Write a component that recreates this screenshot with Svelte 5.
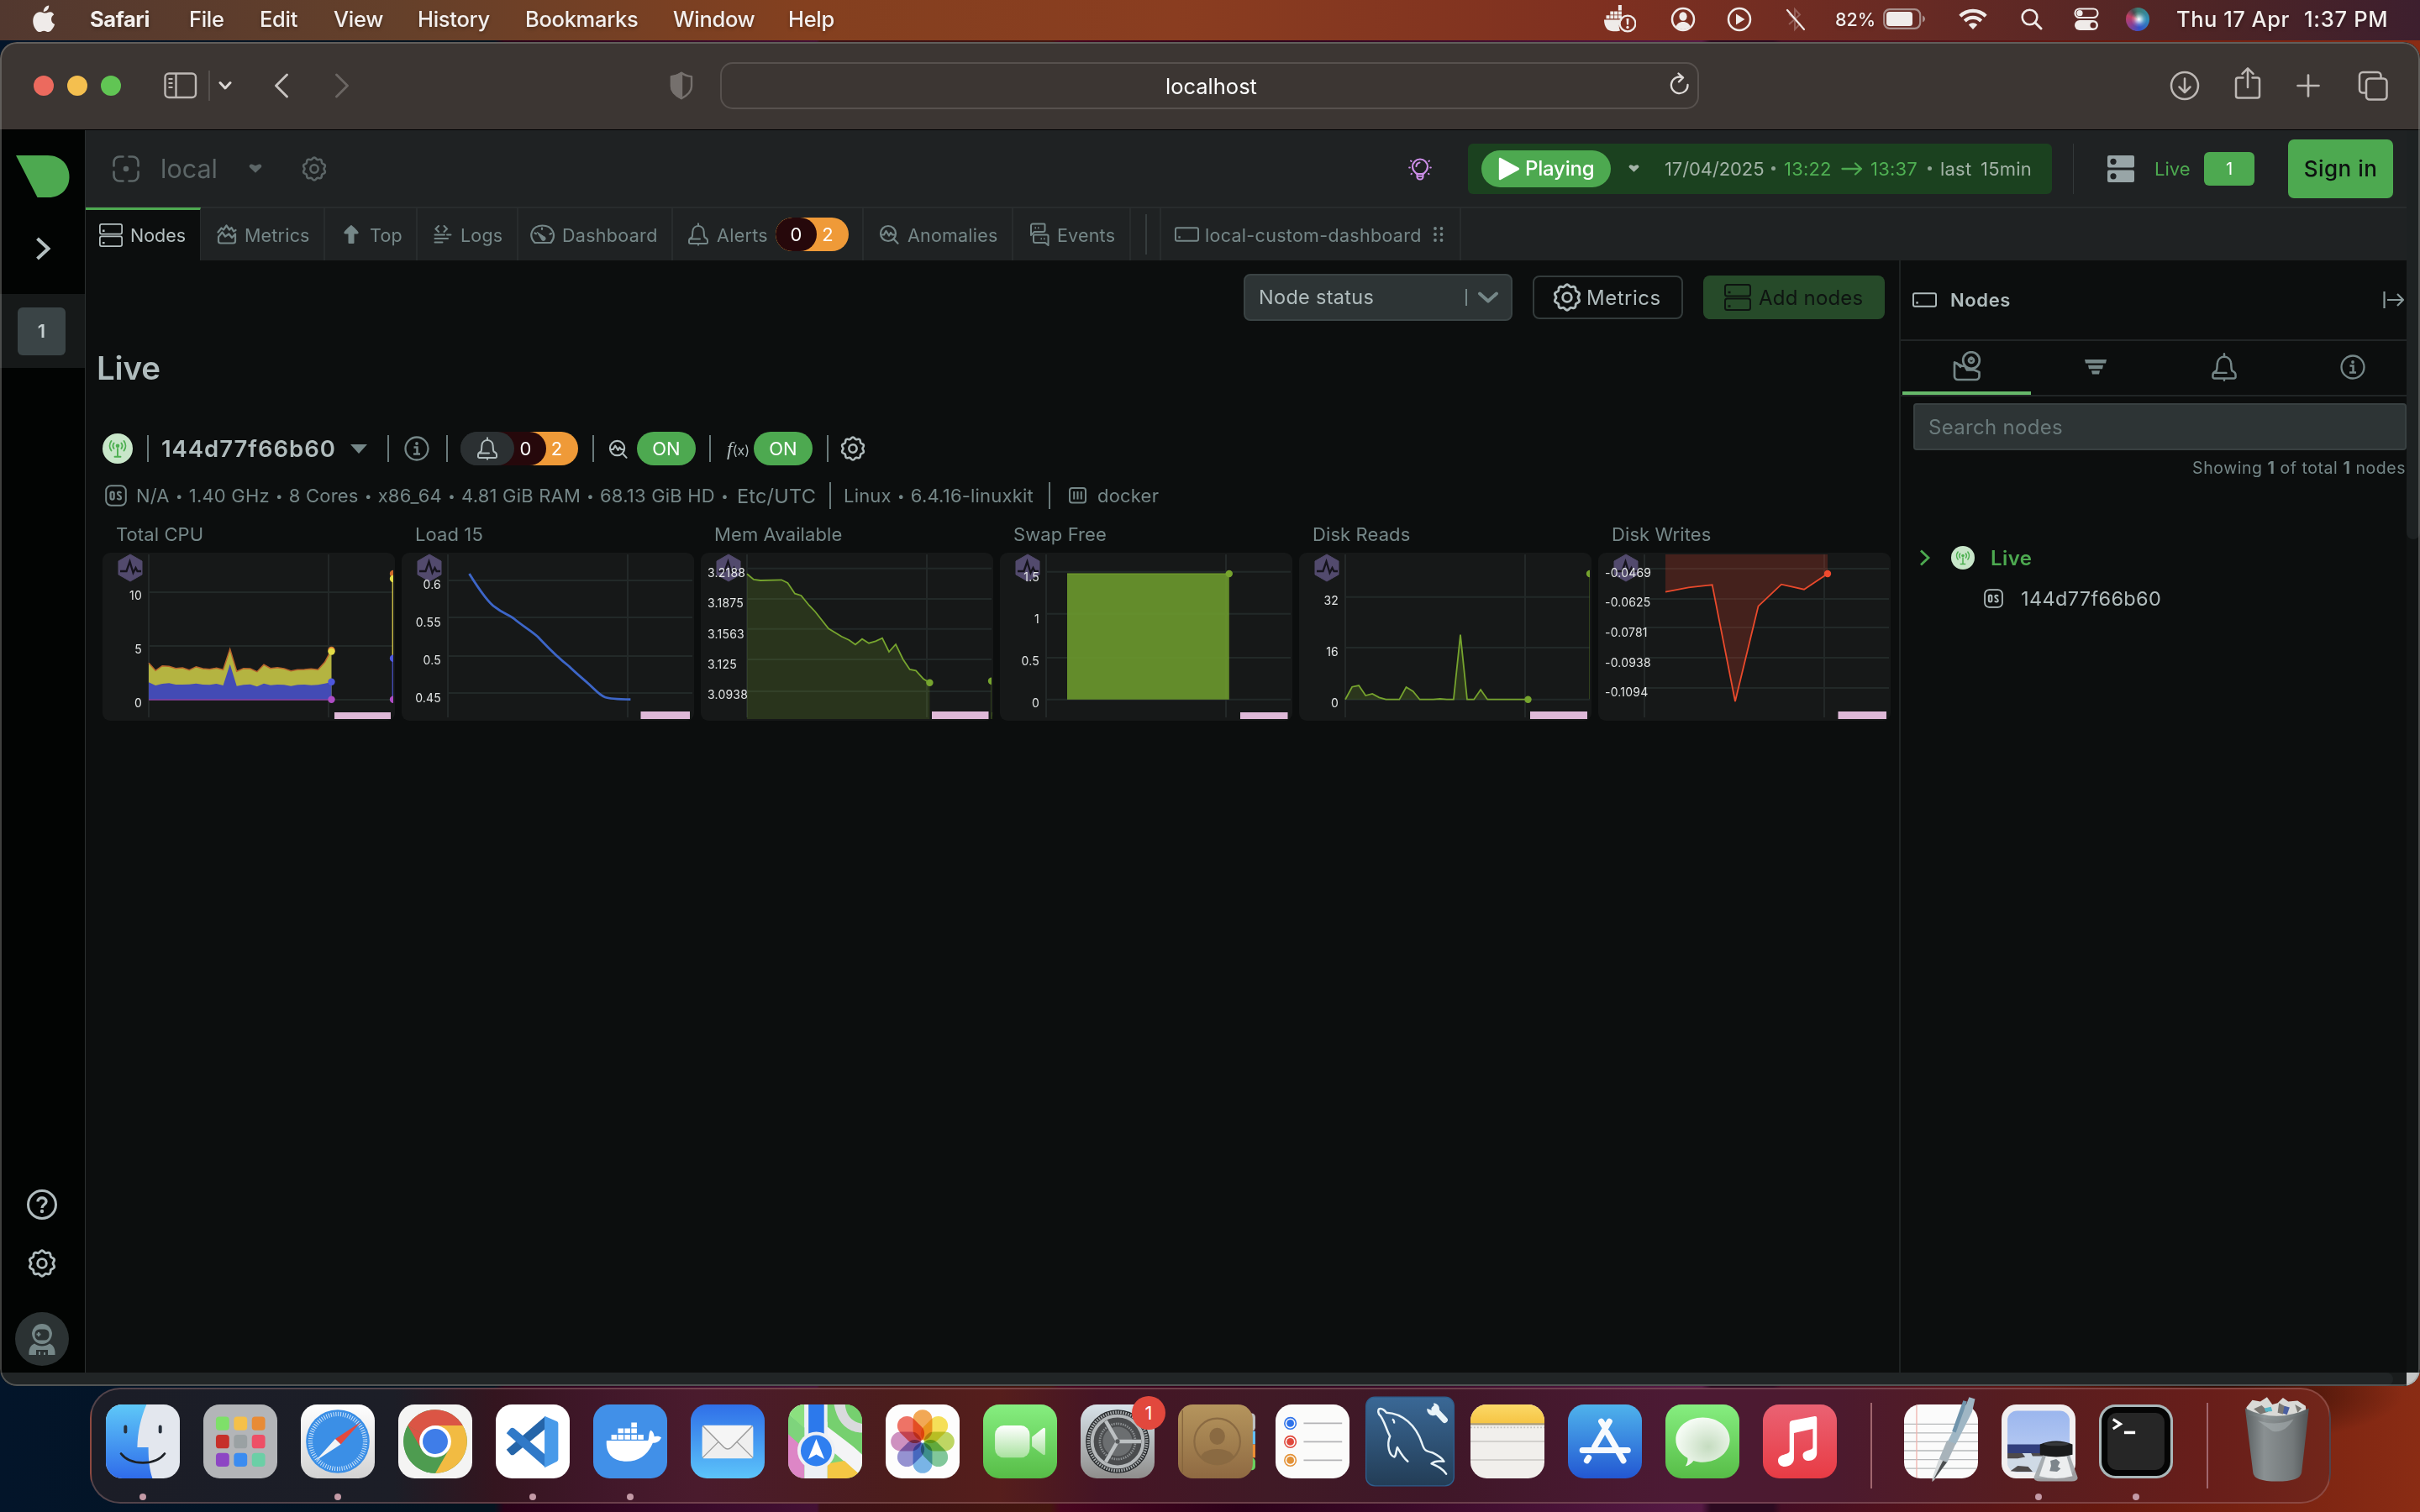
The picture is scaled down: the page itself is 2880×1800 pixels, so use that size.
<script>
  // Scalloped outline used by every settings glyph.
  const gearPath = (() => {
    const pts = [];
    for (let i = 0; i <= 160; i++) {
      const a = (i / 160) * Math.PI * 2 - Math.PI / 2;
      const r = 13.3 + 1.05 * Math.cos(10 * (a + Math.PI / 2));
      pts.push(`${(16 + r * Math.cos(a)).toFixed(2)} ${(16 + r * Math.sin(a)).toFixed(2)}`);
    }
    return 'M' + pts.join('L') + 'Z';
  })();

  const STEP = 8.056;
  const series = (ys) => ys.map((y, i) => [55 + i * STEP, y]);
  const line = (pts) => 'M' + pts.map((p) => p[0].toFixed(1) + ' ' + p[1]).join('L');
  const area = (pts, base) =>
    line(pts) + `L${pts[pts.length - 1][0].toFixed(1)} ${base}L${pts[0][0].toFixed(1)} ${base}Z`;

  const cpuTop = series([131.3, 140.3, 134.7, 135.3, 137.7, 137, 139.7, 135.7, 138, 138.7, 137.3, 139.3, 114.7, 141.3, 137.7, 138, 141.7, 133.3, 137.7, 136.7, 138, 140.7, 139.3, 139, 138.3, 139.3, 130.3, 115.3]);
  const cpuLow = series([154.3, 158, 156, 155.3, 157, 157, 156.7, 155.7, 157, 157.3, 156, 158, 132.7, 158.7, 157.3, 156.7, 159.3, 155.7, 157.7, 157, 157.3, 158.7, 157.3, 157, 157.7, 157.3, 155.7, 154]);
  const load = 'M80.5 25C88 37 101 58 111 64.7C120 72 126 73 133 78C145 88 153 92 162 100C176 115 186 125 199 135C208 144 216 150 223.5 157C232 165 236 170 242 172Q248 174.3 272.4 174.6';
  const mem = [[55, 25.3], [63, 32], [71, 33], [96, 32.3], [103.4, 36], [112, 48.7], [119.4, 51], [129, 62.7], [136, 70], [152, 90.3], [167.5, 99.7], [176.5, 104], [184, 109.3], [192, 102.7], [200, 107.7], [208, 105.3], [216, 101.7], [224, 118], [232, 109], [240.7, 127], [248.7, 139], [256, 140.3], [265, 150.3], [272.4, 154.7]];
  const swap = [[80, 25], [272.8, 25]];
  const z = 174.7;
  const reads = series([z, 159.7, 158, 170, 168, 172.3, z, z, z, 160, 165, z, z, z, 174, z, z, 97.7, z, z, 163, z, z, z, z, z, z, z]);
  const writes = [[80, 46.7], [107.6, 41.3], [135.7, 38.3], [163, 177], [190.5, 63.7], [218, 37.7], [245, 43.7], [273, 25]];

  const charts = [
    {
      title: 'Total CPU',
      grid: [47, 111, 175],
      labels: [['10', 51], ['5', 115], ['0', 179]],
      fills: [[area(cpuTop, 175), '#b4b441'], [area(cpuLow, 175), '#434bb5']],
      lines: [[line(cpuTop), '#b8642c', 1.5], ['M55 175H272', '#8a3fa0', 1.5], ['M345.6 28V125', '#c9bd45', 2], ['M345.6 125V175', '#434bb5', 2]],
      dots: [[272.5, 116, '#dd7a30'], [272.5, 117.6, '#e2dc47'], [272.5, 153.7, '#4d57dd'], [272.5, 174.7, '#ae4cc4'], [346, 25, '#d06a2a'], [346, 31, '#e2dc47'], [346, 125.7, '#4d57dd'], [346, 174.7, '#ae4cc4']],
      bar: [276, 67, 190]
    },
    {
      title: 'Load 15',
      grid: [33, 77, 123, 167],
      labels: [['0.6', 38], ['0.55', 83], ['0.5', 128], ['0.45', 173]],
      fills: [],
      lines: [[load, '#3d66c8', 2.8]],
      dots: [],
      bar: [284.5, 58.5, 189]
    },
    {
      title: 'Mem Available',
      grid: [18.7, 55, 90.7, 127, 165],
      labels: [['3.2188', 24], ['3.1875', 60], ['3.1563', 97], ['3.125', 133], ['3.0938', 169]],
      left: true,
      fills: [[area(mem, 198), 'rgba(118,164,46,0.2)']],
      lines: [[line(mem), '#76a42e', 1.8], ['M346 153V198', '#4c6a22', 1]],
      dots: [[272.4, 154.7, '#76a42e'], [346, 152.7, '#76a42e']],
      bar: [275, 67.5, 189]
    },
    {
      title: 'Swap Free',
      grid: [22.7, 72.7, 125, 174.7],
      labels: [['1.5', 29], ['1', 79], ['0.5', 129], ['0', 178.7]],
      fills: [[area(swap, 174.7), 'rgba(112,160,47,0.86)']],
      lines: [[line(swap), '#76a42e', 1]],
      dots: [[272.8, 25, '#76a42e']],
      bar: [286, 56.5, 190]
    },
    {
      title: 'Disk Reads',
      grid: [52.7, 113, 174.7],
      labels: [['32', 57.3], ['16', 118], ['0', 179]],
      fills: [[area(reads, 174.7), 'rgba(118,164,46,0.22)']],
      lines: [[line(reads), '#76a42e', 1.8], ['M346 25V174', '#4c6a22', 1]],
      dots: [[272.5, 174.7, '#76a42e'], [346, 25, '#76a42e']],
      bar: [275, 68, 189]
    },
    {
      title: 'Disk Writes',
      grid: [19, 55, 89, 125, 161],
      labels: [['-0.0469', 24.3], ['-0.0625', 59.3], ['-0.0781', 95.3], ['-0.0938', 131.3], ['-0.1094', 166.3]],
      left: true,
      fills: [[area(writes, 2), 'rgba(200,60,44,0.26)']],
      lines: [[line(writes), '#ea4a2c', 1.8]],
      dots: [[273, 25, '#f04a2e']],
      bar: [285.5, 57.5, 189]
    }
  ];

  const specs = ['N/A', '1.40 GHz', '8 Cores', 'x86_64', '4.81 GiB RAM', '68.13 GiB HD'];
  const launchpad = ['#7ee069', '#f5c04a', '#e88b35', '#c6302a', '#9aa1a3', '#ee4f66', '#8d46c4', '#3b8cf0', '#6bcfa6'];
  const petals = ['#f39a37', '#f6dc3c', '#b5d148', '#6cc08a', '#62a9e4', '#8480cc', '#c87fb8', '#ee5b4c'];
</script>

{#snippet gear(size)}
  <svg width={size} height={size} viewBox="0 0 32 32" fill="none" stroke="currentColor" stroke-width="2.7">
    <path d={gearPath} /><circle cx="16" cy="16" r="5" />
  </svg>
{/snippet}

{#snippet bell(w, h)}
  <svg width={w} height={h} viewBox="0 0 26 28" fill="none" stroke="currentColor" stroke-width="2" stroke-linecap="round" stroke-linejoin="round">
    <path d="M13 1.2v1.8M5.5 17.5C6.5 15 6 12 6.5 9.500a6.600 6.600 0 0 1 13 0C20 12 19.500 15 20.500 17.500c2 1 3.500 1.500 3.500 4v2a1.500 1.500 0 0 1-1.500 1.500H3.500A1.500 1.500 0 0 1 2 23.500v-2c0-2.500 1.500-3 3.500-4zM2.500 19.600H15M13 25.500v1.300" />
  </svg>
{/snippet}

{#snippet anomaly(size)}
  <svg width={size} height={size} viewBox="0 0 24 24" fill="none" stroke="currentColor" stroke-width="2.2" stroke-linecap="round" stroke-linejoin="round">
    <circle cx="11" cy="11" r="9" /><path d="M17.500 17.500 22.500 22.800M2.500 12.500H6L8.500 8l3.500 5.500 2-3.500 2 2.500h3" />
  </svg>
{/snippet}

{#snippet info(size)}
  <svg width={size} height={size} viewBox="0 0 30 30" fill="none" stroke="currentColor" stroke-width="2.300">
    <circle cx="15" cy="15" r="13.500" /><circle cx="15" cy="9" r="1.900" fill="currentColor" stroke="none" /><path d="M11.500 13.500H15.500V21M11 21.500H19" stroke-width="2.500" />
  </svg>
{/snippet}

{#snippet racks(size)}
  <svg width={size} height={size} viewBox="0 0 32 32" fill="none" stroke="currentColor" stroke-width="2">
    <rect x="1" y="1" width="30" height="13.500" rx="2.500" /><rect x="1" y="17.500" width="30" height="13.500" rx="2.500" /><path d="M4.500 10H7.500M4.500 26.500H7.500" stroke-width="2.600" />
  </svg>
{/snippet}

{#snippet board(w, h)}
  <svg width={w} height={h} viewBox="0 0 30 18" fill="none" stroke="currentColor" stroke-width="2">
    <rect x="1" y="1" width="28" height="16" rx="2" /><path d="M4.500 12.500H7" stroke-width="2.500" />
  </svg>
{/snippet}

{#snippet osIcon(size)}
  <svg width={size} height={size} viewBox="0 0 26 26" fill="none" stroke="currentColor" stroke-width="2">
    <rect x="1.200" y="1.200" width="23.600" height="23.600" rx="6" /><rect x="6.600" y="8.600" width="4" height="9" rx="2" stroke-width="2.300" /><path d="M19 10.300c-.4-2.200-4-2.200-4 .3 0 2.600 4 2.200 4 4.900 0 2.600-3.800 2.600-4.200.400" stroke-width="2.200" />
  </svg>
{/snippet}

{#snippet antenna(size)}
  <svg width={size} height={size} viewBox="0 0 36 36" fill="none">
    <circle cx="18" cy="18" r="18" fill="#c8e6c9" />
    <g stroke="#4caf50" stroke-width="1.900" stroke-linecap="round">
      <path d="M18 18v9.500M14.500 27.700h7M13.600 11.500a5.500 5.500 0 0 0 0 6.500M22.400 11.500a5.500 5.500 0 0 1 0 6.500M10.500 9a9.600 9.600 0 0 0 0 11.500M25.500 9a9.600 9.600 0 0 1 0 11.500" />
    </g>
    <circle cx="18" cy="14.700" r="2.300" fill="#4caf50" />
  </svg>
{/snippet}

{#snippet caret(w, h)}
  <svg width={w} height={h} viewBox="0 0 16 11" fill="currentColor"><path d="M2.600.5C4.500 0 6 1.500 8 2.300 10 1.500 11.500 0 13.400.5 15.500 1.300 15.800 3 14.800 4.300L8 10.800 1.200 4.300C.2 3 .5 1.300 2.600.5z" /></svg>
{/snippet}

<div class="desktop">
  <div class="menubar">
    <svg class="apple" width="28" height="33" viewBox="0 0 26 32" fill="#efebe9">
      <path d="M18 .5c.2 2-.6 3.800-1.700 5.100-1.100 1.300-2.900 2.300-4.500 2.200-.2-1.900.7-3.800 1.700-5C14.700 1.500 16.500.6 18 .5zM23.800 11.200c-1.900 1.200-3 2.900-3 5.200 0 2.700 1.600 4.900 4 5.800-.5 1.600-1.300 3.200-2.300 4.700-1.400 2-2.800 4.100-5 4.100-2.100 0-2.700-1.300-5.200-1.300-2.400 0-3.200 1.300-5.200 1.300-2.100.1-3.700-2.200-5.100-4.200C-.8 22.700-1.200 15.600 1.400 11.800c1.600-2.400 4.100-3.800 6.500-3.800 2.400 0 3.900 1.300 5.900 1.300 1.900 0 3.100-1.300 5.900-1.300 2.100 0 3.400 1.200 4.100 3.200z" />
    </svg>
    <span class="m1">Safari</span><span class="m2">File</span><span class="m3">Edit</span><span class="m4">View</span><span class="m5">History</span><span class="m6">Bookmarks</span><span class="m7">Window</span><span class="m8">Help</span>
    <div class="status">
      <svg width="38" height="33" viewBox="0 0 38 33" fill="#efebe9">
        <path d="M0 17.500H21.500A11.500 11.500 0 0 0 19 30.500C16 32 6 31.500 3.500 28.500 1 25.500 0 21.500 0 17.500z" /><path d="M2.500 12.200h4v4h-4zM7.300 12.200h4v4h-4zM12.100 12.200h4v4h-4zM16.900 12.200h4v4h-4zM7.300 7.400h4v4h-4zM12.100 7.400h4v4h-4zM16.900 7.400h4v4h-4zM16.900 0h4v6.600h-4z" />
        <circle cx="28" cy="22" r="9.400" fill="none" stroke="#efebe9" stroke-width="2.200" /><path d="M26.500 16h3l-.5 7.500h-2z" /><circle cx="28" cy="26.500" r="1.700" />
      </svg>
      <svg class="s2" width="30" height="30" viewBox="0 0 30 30" fill="none" stroke="#efebe9" stroke-width="2.500"><circle cx="15" cy="15" r="13" /><ellipse cx="15" cy="11.500" rx="4.600" ry="5.300" fill="#efebe9" stroke="none" /><path d="M6.500 23.500c1.500-4 5-5.500 8.500-5.500s7 1.500 8.500 5.500A12 12 0 0 1 6.500 23.500z" fill="#efebe9" stroke="none" /></svg>
      <svg class="s3" width="30" height="30" viewBox="0 0 30 30" fill="none" stroke="#efebe9" stroke-width="2.500"><circle cx="15" cy="15" r="13" /><path d="M11 8.500 21.500 15 11 21.500z" fill="#efebe9" stroke="none" /></svg>
      <svg class="s4" width="24" height="30" viewBox="0 0 24 30" fill="none"><path d="M4 9 17 20.500 11 27V3l6 6.500L4 21" stroke="#a0716b" stroke-width="2" opacity=".75" /><path d="M2 4 22 27" stroke="#efebe9" stroke-width="2.200" stroke-linecap="round" /></svg>
      <span class="pct">82%</span>
      <svg class="s5" width="52" height="25" viewBox="0 0 52 25"><rect x="1.200" y="1.200" width="43" height="22.600" rx="6.500" fill="none" stroke="#a88f8c" stroke-width="2.200" /><rect x="4" y="4" width="31" height="17" rx="3.500" fill="#efebe9" /><path d="M47 8.500c4 1.500 4 6.500 0 8z" fill="#a88f8c" /></svg>
      <svg class="s6" width="34" height="26" viewBox="0 0 34 26" fill="none" stroke="#efebe9" stroke-width="4.200"><path d="M1.800 9.200a21.500 21.500 0 0 1 30.400 0M7.300 15a13.600 13.600 0 0 1 19.400 0" /><path d="M17 25 11.800 19.500a7.400 7.400 0 0 1 10.400 0z" fill="#efebe9" stroke="none" /></svg>
      <svg class="s7" width="26" height="26" viewBox="0 0 26 26" fill="none" stroke="#efebe9" stroke-width="2.600" stroke-linecap="round"><circle cx="10.500" cy="10.500" r="8.800" /><path d="M17 17l7 7" stroke-width="3" /></svg>
      <svg class="s8" width="30" height="28" viewBox="0 0 30 28" fill="none" stroke="#efebe9" stroke-width="2.200"><rect x="1.500" y="1.500" width="27" height="10.500" rx="5.200" /><circle cx="7" cy="6.700" r="3.600" fill="#efebe9" stroke="none" /><rect x="1" y="15" width="28" height="12" rx="6" fill="#efebe9" stroke="none" /><circle cx="23" cy="21" r="3.500" fill="#5c2825" stroke="none" /></svg>
      <span class="siri"></span>
      <span class="date">Thu 17 Apr</span><span class="clock">1:37 PM</span>
    </div>
  </div>

  <div class="window">
    <div class="toolbar">
      <i class="light red"></i><i class="light yellow"></i><i class="light green"></i>
      <svg class="sb" width="40" height="32" viewBox="0 0 40 32" fill="none" stroke="#bdb8b5" stroke-width="2.400"><rect x="1.500" y="1.500" width="36.500" height="28.500" rx="4.500" /><path d="M14.500 1.500V30" /><path d="M5.500 8h5M5.500 13h5M5.500 18h5" stroke-width="2" /></svg>
      <i class="vline"></i>
      <svg class="dd" width="16" height="12" viewBox="0 0 16 12" fill="none" stroke="#dcd8d5" stroke-width="3" stroke-linecap="round" stroke-linejoin="round"><path d="M2 2.500 8 9l6-6.500" /></svg>
      <svg class="back" width="18" height="30" viewBox="0 0 18 30" fill="none" stroke="#c7c3c0" stroke-width="2.900" stroke-linecap="round" stroke-linejoin="round"><path d="M15.500 2 2.500 15l13 13" /></svg>
      <svg class="fwd" width="18" height="30" viewBox="0 0 18 30" fill="none" stroke="#6b6663" stroke-width="2.900" stroke-linecap="round" stroke-linejoin="round"><path d="M2.500 2l13 13-13 13" /></svg>
      <svg class="shield" width="28" height="34" viewBox="0 0 28 34" fill="none" stroke="#75706d" stroke-width="2.400" stroke-linejoin="round"><path d="M14 1.800c3.500 2.800 7 4 12 4.300V18c0 6.500-5 10.500-12 14.200C7 28.500 2 24.500 2 18V6.100c5-.3 8.500-1.500 12-4.300z" /><path d="M14 2v30C7 28.500 2 24.500 2 18V6.100C7 5.800 10.500 4.600 14 2z" fill="#75706d" /></svg>
      <div class="url"><span>localhost</span>
        <svg width="24" height="28" viewBox="0 0 24 28" fill="none" stroke="#dedad8" stroke-width="2.300" stroke-linecap="round" stroke-linejoin="round"><path d="M15.500 6.300A9.800 9.800 0 1 0 21.500 15M10.500 1.500l5.500 4.900-5 5" /></svg>
      </div>
      <div class="actions">
        <svg width="36" height="36" viewBox="0 0 36 36" fill="none" stroke="#bdb8b5" stroke-width="2.500" stroke-linecap="round" stroke-linejoin="round"><circle cx="18" cy="18" r="16" /><path d="M18 9.500v16M11.500 19.500l6.500 6.500 6.500-6.500" /></svg>
        <svg class="a2" width="32" height="40" viewBox="0 0 32 40" fill="none" stroke="#bdb8b5" stroke-width="2.500" stroke-linecap="round" stroke-linejoin="round"><path d="M10.500 13.500H4.500a2.500 2.500 0 0 0-2.500 2.500v19a2.500 2.500 0 0 0 2.500 2.500h23a2.500 2.500 0 0 0 2.500-2.500V16a2.500 2.500 0 0 0-2.500-2.500H21.500M16 25V2.500M9.500 8.800 16 2.300l6.500 6.500" /></svg>
        <svg class="a3" width="28" height="28" viewBox="0 0 28 28" fill="none" stroke="#bdb8b5" stroke-width="2.700" stroke-linecap="round"><path d="M14 1.500v25M1.500 14h25" /></svg>
        <svg class="a4" width="36" height="36" viewBox="0 0 36 36" fill="none" stroke="#bdb8b5" stroke-width="2.500"><rect x="10" y="9.500" width="24.500" height="25" rx="4" /><path d="M10 26.500H6a4 4 0 0 1-4-4V6a4 4 0 0 1 4-4h17.500a4 4 0 0 1 4 4v3.500" /></svg>
      </div>
    </div>

    <div class="app">
      <nav class="rail">
        <svg class="logo" width="64" height="50" viewBox="0 0 64 50"><path d="M0 0H38C53 0 63.500 11 63.500 25.500S53 50 39 50H25.500z" fill="#4da950" /></svg>
        <svg class="expand" width="20" height="28" viewBox="0 0 20 28" fill="none" stroke="#b3bfc0" stroke-width="4"><path d="M2.500 2 15.500 14l-13 12" /></svg>
        <div class="space"><b>1</b></div>
        <div class="rail-foot">
          <svg width="38" height="38" viewBox="0 0 38 38" fill="none" stroke="#b0bcbe" stroke-width="3"><circle cx="19" cy="19" r="16.500" /><path d="M14 15.500c0-6 10-6 10 0 0 3.500-5 3.500-5 7.500" stroke-width="3.300" /><circle cx="19" cy="27" r="2.200" fill="#b0bcbe" stroke="none" /></svg>
          <div class="rail-gear">{@render gear(34)}</div>
          <div class="avatar">
            <svg width="34" height="38" viewBox="0 0 34 38"><path d="M17 1c6.500 0 11 4.500 12 11 0 6-4 13-12 13S5 18 5 12C6 5.500 10.500 1 17 1z" fill="#758788" /><rect x="8.500" y="7.500" width="17" height="13" rx="5.500" fill="#2b3233" /><path d="M10.500 13.500h5M13 11v5" stroke="#758788" stroke-width="2" /><path d="M8 24.500c5 4 13 4 18 0 5 2 7 7 6.500 13.500h-31C1 31.500 3 26.500 8 24.500z" fill="#758788" /><path d="M10 38v-6h14v6h-3v-3h-2v3h-4v-4h-2v4z" fill="#2b3233" /></svg>
          </div>
        </div>
      </nav>

      <div class="main">
        <header>
          <svg width="32" height="32" viewBox="0 0 32 32" fill="none" stroke="currentColor" stroke-width="2.600" stroke-linecap="round"><path d="M12.500 1.500H8A6.500 6.500 0 0 0 1.500 8v4.500M19.500 1.500H24A6.500 6.500 0 0 1 30.500 8v4.500M30.500 19.500V24a6.500 6.500 0 0 1-6.500 6.500H19.500M12.500 30.500H8A6.500 6.500 0 0 1 1.500 24V19.500" /><circle cx="16" cy="16" r="3.300" fill="currentColor" stroke="none" /></svg>
          <span class="room">local</span>
          <i class="room-caret">{@render caret(16, 11)}</i>
          <i class="room-gear">{@render gear(30)}</i>
          <svg class="bulb" width="28" height="28" viewBox="0 0 28 28" fill="none" stroke="#cc8ee8" stroke-width="2.100" stroke-linecap="round" stroke-linejoin="round"><path d="M10.500 20.500C8.500 18 5 16.500 5 11.500a9 9 0 0 1 18 0c0 5-3.500 6.500-5.500 9M10.500 19.500v4a3 3 0 0 0 3 3h1a3 3 0 0 0 3-3v-4M10.500 20h7M10.500 22.800h7M9.500 11a5 5 0 0 1 4-4.500M1.200 12.500h.6M26.200 12.500h.6M3 4.500l.6.400M25 4.500l-.6.400M3.500 20.200l.5-.400M24.500 20.200l-.5-.400" /></svg>
          <div class="player">
            <div class="playing"><svg width="26" height="28" viewBox="0 0 26 28" fill="#fff"><path d="M2.500.8 24.500 12.800q1.500 1.200 0 2.400L2.500 27.200Q.8 27.800.8 26V2Q.8.200 2.500.8z" /></svg><span>Playing</span></div>
            <i class="p-caret">{@render caret(13, 9)}</i>
            <span class="t1">17/04/2025</span><u></u><span class="t2 hl">13:22</span>
            <svg class="arrow" width="26" height="18" viewBox="0 0 26 18" fill="none" stroke="#4da950" stroke-width="2.300" stroke-linecap="round" stroke-linejoin="round"><path d="M1.500 9H24M17 2.500 24 9l-7 6.500" /></svg>
            <span class="t3 hl">13:37</span><u></u><span class="t4">last</span><span class="t5">15min</span>
          </div>
          <i class="hd-line"></i>
          <svg class="srv" width="32" height="32" viewBox="0 0 32 32"><rect width="32" height="14.500" rx="2" fill="#98a5a7" /><rect y="17.500" width="32" height="14.500" rx="2" fill="#98a5a7" /><circle cx="7" cy="7.300" r="3.600" fill="#1f2223" /><circle cx="7" cy="24.800" r="3.600" fill="#1f2223" /></svg>
          <span class="live-lbl">Live</span>
          <span class="count">1</span>
          <button>Sign in</button>
        </header>

        <div class="tabs">
          <div class="tab w1 on"><i>{@render racks(28)}</i><span>Nodes</span></div>
          <div class="tab w2"><i><svg width="24" height="24" viewBox="0 0 24 24" fill="none" stroke="currentColor" stroke-width="2.200" stroke-linecap="round" stroke-linejoin="round"><path d="M1.500 9.500 5.500 4.500l2.500 2 3.500-5L15 6.500l2.500-2.500L20 8.500l2.500-1.500M2 21V15L6.500 9.500l3.500 5 4.500-3L18 16l4-4.500V20a2.500 2.500 0 0 1-2.500 2.500h-15A2.500 2.500 0 0 1 2 20z" /></svg></i><span>Metrics</span></div>
          <div class="tab w3"><i><svg width="18" height="22" viewBox="0 0 18 22" fill="currentColor"><path d="M9 0c1 .2 7.500 6.500 8.500 8.500.5 1.300-.3 2-1.500 2H12.500V21q0 1-1 1h-5q-1 0-1-1V10.500H2C.8 10.500 0 9.800.5 8.500 1.500 6.500 8 .2 9 0z" /></svg></i><span>Top</span></div>
          <div class="tab w4"><i><svg width="22" height="22" viewBox="0 0 22 22" fill="none" stroke="currentColor" stroke-width="2" stroke-linecap="round"><path d="M6 1 2.500 4.500 6 8M12.500 1 16 4.500 12.500 8M1.500 11.500H13M16 11.500h4.500M1.500 16H17M1.500 20.500h9" /></svg></i><span>Logs</span></div>
          <div class="tab w5"><i><svg width="30" height="24" viewBox="0 0 30 24" fill="none" stroke="currentColor" stroke-width="2.200" stroke-linecap="round" stroke-linejoin="round"><path d="M5.500 22C-3 13 2.500 1.500 14.500 1.500S32 13 24.500 22zM14 4.500v1.500M5.500 10.500l1.500.7M25 11l-1.500.7" /><path d="M8.500 9.500 16 14.500a2.500 2.500 0 1 1-2.800 3z" fill="currentColor" stroke-width="1" /></svg></i><span>Dashboard</span></div>
          <div class="tab w6"><i>{@render bell(26, 28)}</i><span>Alerts</span><div class="pill sm"><b>0</b><em>2</em></div></div>
          <div class="tab w7"><i>{@render anomaly(24)}</i><span>Anomalies</span></div>
          <div class="tab w8"><i><svg width="24" height="28" viewBox="0 0 24 28" fill="none" stroke="currentColor" stroke-width="2" stroke-linejoin="round"><path d="M2 15V3.500A2 2 0 0 1 4 1.500H17.500a1 1 0 0 1 1 1V9a2 2 0 0 1-2 2H6zM6.500 6.200H8M10 6.200h1.500" /><path d="M22.500 27V16a1.500 1.500 0 0 0-1.500-1.500H6.500A1.500 1.500 0 0 0 5 16v6a2 2 0 0 0 2 2h12zM13.500 19.200H15M17 19.200h1.500" /></svg></i><span>Events</span></div>
          <div class="tab w9"><i class="mini"></i></div>
          <div class="tab w10"><i>{@render board(29, 18)}</i><span>local-custom-dashboard</span><svg class="grip" width="14" height="20" viewBox="0 0 14 20" fill="currentColor"><circle cx="3" cy="3" r="1.900" /><circle cx="10.500" cy="3" r="1.900" /><circle cx="3" cy="10" r="1.900" /><circle cx="10.500" cy="10" r="1.900" /><circle cx="3" cy="17" r="1.900" /><circle cx="10.500" cy="17" r="1.900" /></svg></div>
        </div>

        <div class="body">
          <section class="content">
            <div class="controls">
              <div class="select"><span>Node status</span><i></i><svg width="26" height="14" viewBox="0 0 26 14" fill="none" stroke="#758788" stroke-width="4" stroke-linecap="round" stroke-linejoin="round"><path d="M3 2.500 13 11.500 23 2.500" /></svg></div>
              <div class="btn outline">{@render gear(34)}<span>Metrics</span></div>
              <div class="btn solid">{@render racks(32)}<span>Add nodes</span></div>
            </div>
            <h1>Live</h1>
            <div class="host">
              {@render antenna(36)}<i class="bar"></i><b class="name">144d77f66b60</b>
              <svg width="20" height="11" viewBox="0 0 20 11" fill="#758788"><path d="M0 0h20L10 11z" /></svg>
              <i class="bar"></i><i class="dim">{@render info(30)}</i><i class="bar"></i>
              <div class="pill lg"><s>{@render bell(26, 28)}</s><b>0</b><em>2</em></div>
              <i class="bar"></i><i class="bright">{@render anomaly(23)}</i><span class="on-pill">ON</span><i class="bar"></i>
              <span class="fx">f<small>(x)</small></span><span class="on-pill">ON</span><i class="bar"></i><i class="bright">{@render gear(30)}</i>
            </div>
            <div class="meta">
              {@render osIcon(26)}
              <div class="specs">{#each specs as s}<span>{s}</span><small>•</small>{/each}</div>
              <span class="tz">Etc/UTC</span><i class="bar"></i>
              <div class="specs"><span>Linux</span><small>•</small><span>6.4.16-linuxkit</span></div><i class="bar"></i>
              <svg width="21" height="20" viewBox="0 0 21 20" fill="none" stroke="currentColor" stroke-width="2"><rect x="1" y="1" width="19" height="17.500" rx="3" /><path d="M6.200 5v9.500M10.500 5v9.500M14.800 5v9.500" /></svg><span>docker</span>
            </div>
            <div class="cards">
              {#each charts as c}
                <div class="chart">
                  <h2>{c.title}</h2>
                  <svg width="348" height="200" viewBox="0 0 348 200">
                    <rect width="348" height="200" rx="9" fill="#161818" />
                    <path d="M33 2 47 10V26L33 34 19 26V10z" fill="#524a6d" stroke="#524a6d" stroke-width="1" stroke-linejoin="round" />
                    <path d="M21 22h7.500l4-11.500L36.500 24l3-6 2 4H46" fill="none" stroke="#15131c" stroke-width="2.300" />
                    <path d="M55 2V196M269 2V196" stroke="#232828" stroke-width="2" />
                    {#each c.grid as y}<path d="M55 {y}H346" stroke="#222928" stroke-width="2" />{/each}
                    {#each c.fills as f}<path d={f[0]} fill={f[1]} />{/each}
                    {#each c.lines as l}<path d={l[0]} fill="none" stroke={l[1]} stroke-width={l[2]} />{/each}
                    {#each c.dots as d}<circle cx={d[0]} cy={d[1]} r="4.200" fill={d[2]} />{/each}
                    <rect x="346" y="10" width="2" height="180" fill="#161818" />
                    <rect x="348" y="10" width="4" height="180" fill="#0c0e0e" />
                    {#each c.labels as t}
                      <text class="tick" class:start={c.left} x={c.left ? 8 : 47} y={t[1] + 5}>{t[0]}</text>
                    {/each}
                    <rect x={c.bar[0]} y={c.bar[2]} width={c.bar[1]} height={198 - c.bar[2]} fill="#dfb9d8" />
                  </svg>
                </div>
              {/each}
            </div>
          </section>

          <aside>
            <div class="a-title">{@render board(29, 18)}<b>Nodes</b>
              <svg class="collapse" width="26" height="20" viewBox="0 0 26 20" fill="none" stroke="#8a9a9b" stroke-width="2.200" stroke-linejoin="round"><path d="M1.500 0v20M5 10H24M17 3l7 7-7 7" /></svg>
            </div>
            <div class="a-tabs">
              <i class="sel"><svg width="34" height="36" viewBox="0 0 34 36" fill="none" stroke="currentColor" stroke-width="2.700" stroke-linejoin="round"><circle cx="22" cy="11" r="9.800" /><circle cx="22" cy="11" r="3" /><path d="M22 11v-4.500" /><path d="M2 13.500V30a4 4 0 0 0 4 4H27.500a4 4 0 0 0 4-4V25l-6-2.500H17L14.500 18l-4-.5L2 13.500l3 1 5 5" /></svg></i>
              <i><svg width="26" height="18" viewBox="0 0 26 18" fill="currentColor"><path d="M0 0H26L25 4.500H1zM4 6.700H22L21 11.200H5zM8 13.300H18L17 17.500H9z" /></svg></i>
              <i>{@render bell(32, 36)}</i>
              <i>{@render info(30)}</i>
            </div>
            <div class="search">Search nodes</div>
            <p>Showing <b>1</b> of total <b>1</b> nodes</p>
            <div class="row live"><svg width="14" height="20" viewBox="0 0 14 20" fill="none" stroke="#4da950" stroke-width="2.800"><path d="M2 1.500 11 10l-9 8.500" /></svg>{@render antenna(28)}<b>Live</b></div>
            <div class="row leaf">{@render osIcon(23)}<span>144d77f66b60</span></div>
          </aside>
        </div>
      </div>
      <div class="vscroll"><i></i></div>
    </div>
    <div class="hscroll"><i></i><u></u></div>
  </div>

  <div class="dock">
    <div class="slot run">
      <svg viewBox="0 0 100 100">
        <defs>
          <clipPath id="sq"><rect width="100" height="100" rx="22" /></clipPath>
          <linearGradient id="gFinder" x2="0" y2="1"><stop stop-color="#5ec8f8" /><stop offset="1" stop-color="#2f6cea" /></linearGradient>
          <linearGradient id="gWhite" x2="0" y2="1"><stop stop-color="#fff" /><stop offset="1" stop-color="#d3d3d3" /></linearGradient>
          <linearGradient id="gMail" x2="0" y2="1"><stop stop-color="#2f6fe8" /><stop offset="1" stop-color="#5cc4fa" /></linearGradient>
          <linearGradient id="gGreen" x2="0" y2="1"><stop stop-color="#86ee80" /><stop offset="1" stop-color="#57bd47" /></linearGradient>
          <linearGradient id="gStore" x2="0" y2="1"><stop stop-color="#4fb3ec" /><stop offset="1" stop-color="#2357d2" /></linearGradient>
          <linearGradient id="gMusic" x2="0" y2="1"><stop stop-color="#ea6273" /><stop offset="1" stop-color="#e83b44" /></linearGradient>
          <linearGradient id="gTan" x2="0" y2="1"><stop stop-color="#b5955d" /><stop offset="1" stop-color="#8f6a42" /></linearGradient>
          <linearGradient id="gSql" x2="0" y2="1"><stop stop-color="#3a6896" /><stop offset="1" stop-color="#233d56" /></linearGradient>
          <linearGradient id="gNote" x2="0" y2="1"><stop stop-color="#fbd968" /><stop offset="1" stop-color="#f6c443" /></linearGradient>
          <linearGradient id="gCam" x2="0" y2="1"><stop stop-color="#fff" /><stop offset="1" stop-color="#a9e29f" /></linearGradient>
          <radialGradient id="gBubble" cx=".6" cy=".6" r=".6"><stop stop-color="#c5dcc0" /><stop offset="1" stop-color="#f4fbf3" /></radialGradient>
          <linearGradient id="gSea" x2="0" y2="1"><stop stop-color="#9bb6ee" /><stop offset="1" stop-color="#c3d3f4" /></linearGradient>
          <linearGradient id="gBin" x2="1" y2="0"><stop stop-color="#5a6264" /><stop offset=".3" stop-color="#8b9496" /><stop offset=".75" stop-color="#737b7d" /><stop offset="1" stop-color="#4e5456" /></linearGradient>
          <linearGradient id="gSys" x2="0" y2="1"><stop stop-color="#d8e3ea" /><stop offset="1" stop-color="#8f8e8c" /></linearGradient>
        </defs>
        <g clip-path="url(#sq)"><rect width="100" height="100" fill="#e3e7ee" /><path d="M0 0H55C47 18 43 38 42.500 58H57.500C57.500 76 59 88 63 100H0z" fill="url(#gFinder)" /></g>
        <path d="M26.500 30v7M73.500 30v7" stroke="#27303c" stroke-width="4.500" stroke-linecap="round" /><path d="M20.500 66.500C33 83 67 83 79.500 66.500" fill="none" stroke="#1d2126" stroke-width="3.200" stroke-linecap="round" />
      </svg>
    </div>
    <div class="slot"><svg viewBox="0 0 100 100"><rect width="100" height="100" rx="22" fill="#b3b5b8" />{#each launchpad as c, i}<rect x={17 + (i % 3) * 24.300} y={16.500 + Math.floor(i / 3) * 24.500} width="18" height="18.500" rx="4.500" fill={c} />{/each}</svg></div>
    <div class="slot run"><svg viewBox="0 0 100 100"><rect width="100" height="100" rx="22" fill="url(#gWhite)" /><circle cx="50" cy="50" r="43" fill="#3b8fe6" /><circle cx="50" cy="50" r="37" fill="none" stroke="#d5e8fa" stroke-width="6" stroke-dasharray="1.100 2.129" /><path d="M81 24 46.500 46.500 54 54z" fill="#e2493e" /><path d="M20 76 46.500 46.500 54 54z" fill="#f2f4f6" /></svg></div>
    <div class="slot"><svg viewBox="0 0 100 100"><rect width="100" height="100" rx="22" fill="#f4f4f3" /><circle cx="50" cy="50" r="43" fill="#4e9c50" /><path d="M50 50 12.800 28.500A43 43 0 0 1 87.200 28.500z" fill="#db5545" /><path d="M50 28.500H87.200A43 43 0 0 1 50 93L68.600 60.800z" fill="#f2bb42" /><path d="M12.800 28.500 31 61 50 50z" fill="#db5545" /><path d="M12.800 28.500A43 43 0 0 0 50 93L66 64 31.400 60.800z" fill="#4e9c50" /><circle cx="50" cy="50" r="21.500" fill="#fff" /><circle cx="50" cy="50" r="17" fill="#3f7de8" /></svg></div>
    <div class="slot run"><svg viewBox="0 0 100 100"><rect width="100" height="100" rx="22" fill="#fff" /><path d="M14.500 61 20 67.500q2 2 5 0L67 33V16z" fill="#2565a9" /><path d="M14.500 39 20 32.500q2-2 5 0L67 68V85z" fill="#3079c8" /><path d="M66 15.500 83 23Q84.500 24 84.500 26V74Q84.500 76 83 77L66 85.500z" fill="#489ae9" /></svg></div>
    <div class="slot run"><svg viewBox="0 0 100 100"><rect width="100" height="100" rx="22" fill="#4190e8" /><path d="M18 49H74C76 46 74.500 39 77.500 35 81 36 82.500 41 82.500 43.500 86 42 90 43 92 44.500 90 50 86 52 80.500 52 74 68 62 77 45 77 27 77 16.500 67 18 49zM24.500 41h7.500v6.500h-7.500zM33.500 41H41v6.500h-7.500zM42.500 41H50v6.500h-7.500zM51.500 41H59v6.500h-7.500zM60.500 41H68v6.500h-7.500zM33.500 32.500H41V39h-7.500zM42.500 32.500H50V39h-7.500zM51.500 32.500H59V39h-7.500zM51.500 24.500H59V31h-7.500z" fill="#fff" /></svg></div>
    <div class="slot"><svg viewBox="0 0 100 100"><rect width="100" height="100" rx="22" fill="url(#gMail)" /><rect x="15.500" y="28" width="69" height="45" rx="3.500" fill="#efefef" /><path d="M16 72 39 49M84 72 61 49" stroke="#9c9c9c" stroke-width="1.500" /><path d="M16.500 29 45 58q5 4.500 10 0L83.500 29" fill="#f5f5f5" stroke="#9c9c9c" stroke-width="1.700" /></svg></div>
    <div class="slot"><svg viewBox="0 0 100 100"><g clip-path="url(#sq)"><rect width="100" height="100" fill="#7ed47c" /><path d="M0 40 22 60V100H0z" fill="#dd86c6" /><path d="M0 12 100 98V68L28 0H0z" fill="#f4f4f6" /><path d="M0 0H22V32L0 12z" fill="#8be07f" /><path d="M53 0H100V66L53 30z" fill="#76d06f" /><path d="M62 0C66 24 80 38 100 38V26C86 24 78 14 77 0z" fill="#d9dadd" /><path d="M53 80 76 76 100 98V100H53z" fill="#f4c744" /><rect x="22" width="31" height="100" fill="#edf0f5" /><rect x="27.500" width="21" height="50" fill="#2c79ec" /></g><circle cx="38" cy="62.500" r="25.500" fill="#eef0f4" /><circle cx="38" cy="62.500" r="21" fill="#2f7ff0" /><path d="M38 46.500 49 74 38 67.500 27 74z" fill="#fff" /></svg></div>
    <div class="slot"><svg viewBox="0 0 100 100"><rect width="100" height="100" rx="22" fill="#fdfdfd" />{#each petals as c, i}<rect class="petal" x="37" y="7" width="26" height="41" rx="13" fill={c} transform="rotate({i * 45} 50 50)" />{/each}</svg></div>
    <div class="slot"><svg viewBox="0 0 100 100"><rect width="100" height="100" rx="22" fill="url(#gGreen)" /><rect x="16" y="28.500" width="47" height="43.500" rx="12" fill="url(#gCam)" /><path d="M66 44 81 32q3-1.500 3 1.500V66.500q0 3-3 1.500L66 56.500z" fill="url(#gCam)" /></svg></div>
    <div class="slot">
      <svg viewBox="0 0 100 100"><rect width="100" height="100" rx="22" fill="url(#gSys)" /><circle cx="50" cy="50" r="43" fill="#25282a" /><circle cx="50" cy="50" r="37.500" fill="#4a4c4e" /><circle cx="50" cy="50" r="39.500" fill="none" stroke="#a9adaf" stroke-width="4" stroke-dasharray="1.900 1.545" /><circle cx="50" cy="50" r="34.500" fill="none" stroke="#b4b8ba" stroke-width="4.500" /><circle cx="50" cy="50" r="20" fill="#6b6e70" /><circle cx="50" cy="50" r="24" fill="none" stroke="#8d9193" stroke-width="3" stroke-dasharray="1.700 1.442" /><path d="M50 50H82M50 50 34 22.300M50 50 34 77.700" stroke="#bcc0c2" stroke-width="5" /><circle cx="50" cy="50" r="3" fill="#55585a" /></svg>
      <b class="badge">1</b>
    </div>
    <div class="slot"><svg viewBox="0 0 100 100"><rect x="92" y="12" width="12.500" height="24" rx="5" fill="#bfc1c2" /><rect x="92" y="36" width="12.500" height="18" fill="#64c0f5" /><rect x="92" y="54" width="12.500" height="18" fill="#ee8f35" /><rect x="92" y="72" width="12.500" height="17" rx="5" fill="#6ad35f" /><rect width="101" height="100" rx="20" fill="url(#gTan)" /><path d="M6 8V92" stroke="#86653d" stroke-width="1.500" /><circle cx="53" cy="50" r="31" fill="none" stroke="#8a6a42" stroke-width="2.500" /><ellipse cx="53" cy="43" rx="10.500" ry="11.500" fill="#8a6a42" /><path d="M31 70c6-13 38-13 44 0-8 14-36 14-44 0z" fill="#8a6a42" /></svg></div>
    <div class="slot"><svg viewBox="0 0 100 100"><rect width="100" height="100" rx="22" fill="#fbfbfa" />{#each ['#2f73ea', '#e0483c', '#e39136'] as c, i}<circle cx="20" cy={25.500 + i * 25} r="7.700" fill="none" stroke={c} stroke-width="1.800" /><circle cx="20" cy={25.500 + i * 25} r="5" fill={c} /><path d="M38 {25.500 + i * 25}H90" stroke="#b4b4b6" stroke-width="2" />{/each}</svg></div>
    <div class="slot"><svg viewBox="0 0 100 100"><rect x="-9.500" y="-10" width="119" height="120" rx="12" fill="url(#gSql)" stroke="#2d5f8e" stroke-width="1.500" /><path d="M8 13C4 2 14 5 18 11 40 12 58 28 66 52 69 62 71 63 80 65 88 69 93 72 96 77 88 76 82 77 79 80 86 83 94 86 99 94M8 13c7 6 10 22 15 30-5 12-1 26 6 28 3-3 2-10 4-13 4 7 7 13 14 19" fill="none" stroke="#e8f3f8" stroke-width="2.800" stroke-linejoin="round" stroke-linecap="round" /><path d="M26 20c2 1 3 3 2.500 5.500" stroke="#e8f3f8" stroke-width="2.500" fill="none" /><path d="M83 6 97 21" stroke="#e8f3f8" stroke-width="8" stroke-linecap="round" /><path d="M82-2A8.500 8.500 0 1 1 73 5.500L79.500 8 82.500 4z" fill="#e8f3f8" /></svg></div>
    <div class="slot"><svg viewBox="0 0 100 100"><g clip-path="url(#sq)"><rect width="100" height="100" fill="#f1efec" /><rect width="100" height="26" fill="url(#gNote)" /><path d="M0 26.500H100" stroke="#a89b7a" stroke-width="2.500" /><path d="M0 31H100" stroke="#c4c2be" stroke-width="2" stroke-dasharray="2 2.500" /><path d="M0 50H100M0 75H100" stroke="#d3d1ce" stroke-width="2" /></g></svg></div>
    <div class="slot"><svg viewBox="0 0 100 100"><rect width="100" height="100" rx="22" fill="url(#gStore)" /><g stroke="#f7fafd" stroke-width="8" stroke-linecap="round"><path d="M45 23 50 31M56 23 36 57M53 38 75 76M19.500 62H81M28 72 25.500 76" /></g></svg></div>
    <div class="slot"><svg viewBox="0 0 100 100"><rect width="100" height="100" rx="22" fill="url(#gGreen)" /><path d="M50.500 17.500C71 17.500 87 30.500 87 47.500S71 78 50.500 78C46 78 42 77.500 38 76 35 80 31 82.500 27 83.500 29.500 80 30.500 76 30 72.500 20 67 14 58 14 47.500 14 30.500 30 17.500 50.500 17.500z" fill="url(#gBubble)" /></svg></div>
    <div class="slot"><svg viewBox="0 0 100 100"><rect width="100" height="100" rx="22" fill="url(#gMusic)" /><path d="M36 26q0-3 3-4L70 16q3-.5 3 2.500V66c0 12-19 14-19 3 0-8 13-6 13.500-11V33L42 38.500V73c0 13-21.500 15-21.500 3C20.500 66 35 69 36 63z" fill="#fff" /></svg></div>
    <i class="sep"></i>
    <div class="slot"><svg viewBox="0 0 100 100"><g clip-path="url(#sq)"><rect width="100" height="100" fill="#fbfbfb" /><path d="M0 26.500H100M0 38.500H100M0 50.500H100M0 62.500H100M0 74.500H100M0 86.500H100" stroke="#b7b9bb" stroke-width="1.500" /><path d="M17 0V100" stroke="#efb3ae" stroke-width="1.500" /></g><path d="M88-10 96-7.500 92 10 70 54 59 50 84 0z" fill="#9fb6c4" /><path d="M80-5.500 85-4 81 8 70 38 65 36z" fill="#6f93ab" /><path d="M58 49 70 53 58 79 47 75z" fill="#a8b3ba" /><path d="M47 74 58 78 41 102 38 104.500 38.500 99z" fill="#d5d9db" /><path d="M58 78 52.500 76 38.500 104z" fill="#4b4e50" /></svg></div>
    <div class="slot run"><svg viewBox="0 0 100 100"><rect width="100" height="100" rx="20" fill="#f1eff0" /><rect x="8" y="8.500" width="84" height="83" rx="13" fill="url(#gSea)" /><path d="M8 54H92V66H8z" fill="#323f7d" /><path d="M8 66H92V78.500A13 13 0 0 1 79 91.500H21A13 13 0 0 1 8 78.500z" fill="#cfdae6" /><path d="M8 66h20l4 5-10 2H8zM40 66h16v4H42zM12 90l10-7 14 1 6 7H21z" fill="#4e4a4a" /><path d="M56 68H92L103 99Q103 104 95 104H53Q43 104 44 98z" fill="#a3a8ab" opacity=".92" /><path d="M60 70H88L96 97Q74 103 51 97z" fill="#eceeef" /><path d="M66 76l8-2 5 4-3 6 4 3-5 4-10-1 2-7z" fill="#7d858b" /><path d="M52 54Q74 45 96 54V68Q74 74 52 68z" fill="#1a1b1c" /><ellipse cx="74" cy="53.500" rx="17" ry="2.500" fill="#36383a" /></svg></div>
    <div class="slot run"><svg viewBox="0 0 100 100"><rect width="100" height="100" rx="22" fill="#a9b7b9" /><rect x="3.500" y="3.500" width="93" height="93" rx="19" fill="#050505" /><rect x="11.500" y="11.500" width="77" height="77" rx="12" fill="#262626" /><path d="M19 20 29 26.500 19 33" fill="none" stroke="#fff" stroke-width="3.600" /><path d="M34 38H49" stroke="#fff" stroke-width="4" /></svg></div>
    <i class="sep second"></i>
    <div class="slot"><svg viewBox="0 0 100 100"><g transform="scale(.9 1)"><path d="M3 4 12-6 24-4 34-10 42 0 50-2 58-9 66-4 80-5 92 2 93 12 50 22 5 14z" fill="#d9d9d6" /><path d="M14 6l12-5 10 9-12 3zM52-2l12 6-6 9-8-2zM76 0l10 5-6 6z" fill="#7a7772" /><path d="M30 5l10-2 2 6-10 1z" fill="#57b7c8" /><path d="M60 2l8 2-4 10-6-2z" fill="#4a5fa0" /><path d="M1 5Q48 26 97 5L86 92Q84 104 49 104T13 92z" fill="url(#gBin)" opacity=".97" /><path d="M20 22Q48 30 74 20 60 40 42 36z" fill="#aeb6b8" opacity=".5" /></g></svg></div>
  </div>
</div>

<style>
  :global(body) { margin: 0; background: #03111f; }
  .desktop {
    width: 2880px; height: 1800px; overflow: hidden; display: flex; flex-direction: column;
    font-family: Inter, "Liberation Sans", sans-serif;
    background:
      radial-gradient(ellipse 220px 60px at 2640px 1660px, rgba(20, 5, 2, .8), transparent),
      linear-gradient(90deg, #03152a 0, #04131f 560px, #04131f 588px, #2a0118 600px, #431034 972px, #3c1016 976px, #44160f 1250px, #48061f 1262px, #2c0119 1480px, #561a45 2025px, #2c0a20 2036px, #2c0a20 2110px, #440d24 2120px, #66190f 2500px, #8a2c14 2880px);
  }
  .desktop i, .desktop u, .desktop s, .desktop em { font-style: normal; text-decoration: none; display: block; flex: none; }
  svg { display: block; flex: none; }

  .menubar {
    height: 48px; flex: none; display: flex; align-items: center; box-sizing: border-box; padding: 0 0 3px 39px; margin-bottom: 2px;
    color: #f3efed; font-size: 25.500px; white-space: nowrap; text-shadow: 0 2px 4px rgba(0, 0, 0, .3);
    background: linear-gradient(90deg, #52382f 0, #65402a 480px, #84401f 960px, #8a3d20 1400px, #7f3020 1900px, #662a24 2300px, #4c2426 2650px, #3d1f2e 2880px);
  }
  .apple { margin-right: 40px; }
  .m1 { width: 118px; font-weight: 700; letter-spacing: -.4px; }
  .m2 { width: 84px; } .m3 { width: 88px; } .m4 { width: 100px; } .m5 { width: 128px; } .m6 { width: 176px; } .m7 { width: 137px; } .m8 { width: 60px; }
  .m2, .m3, .m4, .m5, .m6, .m7, .m8 { font-weight: 500; letter-spacing: -.3px; }
  .status { margin-left: auto; display: flex; align-items: center; padding-right: 38px; }
  .s2 { margin-left: 41px; } .s3 { margin-left: 37px; } .s4 { margin-left: 40px; }
  .pct { margin-left: 35px; width: 57px; font-size: 21.500px; font-weight: 500; }
  .s5 { width: 52px; } .s6 { margin-left: 38px; } .s7 { margin-left: 40px; } .s8 { margin-left: 37px; }
  .siri { width: 28px; height: 28px; margin-left: 32px; border-radius: 50%; background: radial-gradient(circle at 55% 50%, #fff 0, rgba(255, 255, 255, .2) 30%, transparent 45%), conic-gradient(#3f7c72, #2f8fb8 90deg, #3550c8 170deg, #8c3f90 230deg, #c23f63 290deg, #4b4a50 330deg, #3f7c72); }
  .date, .clock { font-weight: 500; letter-spacing: .5px; }
  .date { margin-left: 32px; width: 152px; } .clock { width: 100px; letter-spacing: .7px; }

  .window { height: 1600px; flex: none; position: relative; border-radius: 20px; overflow: hidden; background: #0c0e0e; display: flex; flex-direction: column; }
  .window::after { content: ""; position: absolute; inset: 0; border-radius: 20px; box-shadow: inset 0 0 0 2px rgba(150, 150, 148, .42); pointer-events: none; }
  .toolbar { height: 104px; flex: none; background: #3c3633; border-bottom: 1px solid #000; display: flex; align-items: center; padding-left: 40px; }
  .light { width: 24px; height: 24px; border-radius: 50%; margin-right: 16px; }
  .red { background: #ec6a5e; } .yellow { background: #f4bf4f; } .green { background: #61c554; }
  .sb { margin-left: 35px; }
  .vline { width: 2px; height: 36px; background: #55504d; margin-left: 13px; }
  .dd { margin-left: 10px; } .back { margin-left: 50px; } .fwd { margin-left: 54px; } .shield { margin-left: 381px; }
  .url { width: 1165px; height: 56px; box-sizing: border-box; margin-left: 32px; border: 2px solid #57514e; border-radius: 15px; display: flex; align-items: center; justify-content: center; position: relative; color: #fff; font-size: 25.500px; letter-spacing: 0; padding-left: 4px; }
  .url svg { position: absolute; right: 9px; top: 10px; }
  .actions { margin-left: auto; display: flex; align-items: center; padding-right: 38px; }
  .a2 { margin-left: 41px; margin-top: -6px; } .a3 { margin-left: 42px; } .a4 { margin-left: 45px; }

  .app { flex: none; height: 1479px; display: flex; }
  .rail { width: 102px; flex: none; box-sizing: border-box; border-right: 1px solid #2b3030; background: #020403; display: flex; flex-direction: column; align-items: center; }
  .logo { margin: 30px 0 0 0; }
  .expand { margin: 47px 0 0 2px; }
  .space { width: 100%; height: 88px; margin-top: 40px; background: #161919; display: flex; align-items: center; justify-content: center; }
  .space b { width: 57px; height: 57px; border-radius: 6px; background: #3a4446; color: #c5cfd0; font-size: 22px; font-weight: 600; line-height: 57px; text-align: center; margin-right: 2px; }
  .rail-foot { margin-top: auto; display: flex; flex-direction: column; align-items: center; color: #b0bcbe; padding: 0 2px 8px 0; }
  .rail-gear { margin-top: 34px; }
  .avatar { margin-top: 41px; width: 64px; height: 64px; border-radius: 50%; background: #2b3233; display: flex; align-items: center; justify-content: center; }

  .main { width: 2762px; flex: none; display: flex; flex-direction: column; }
  header { height: 93px; flex: none; box-sizing: border-box; border-bottom: 2px solid #282c2d; background: #1f2223; display: flex; align-items: center; padding: 0 16px 0 32px; color: #5c6667; white-space: nowrap; }
  .room { margin-left: 25px; width: 105px; font-size: 30.500px; letter-spacing: 0; }
  .desktop .room-caret { width: 63px; }
  .bulb { margin-left: auto; margin-right: 43px; }
  .player { width: 695px; height: 60px; border-radius: 6px; background: #1b411f; display: flex; align-items: center; box-sizing: border-box; padding-left: 16px; color: #a3b3a7; font-size: 22px; letter-spacing: .2px; }
  .playing { width: 154px; height: 44px; border-radius: 22px; background: #4da950; display: flex; align-items: center; color: #fff; font-size: 24px; font-weight: 500; letter-spacing: -.2px; box-sizing: border-box; padding-left: 20px; gap: 6px; }
  .desktop .p-caret { width: 13px; margin: 0 30px 0 21px; }
  .player u { width: 5px; height: 5px; border-radius: 50%; background: #8fa394; margin: 0 12px 0 8px; }
  .t1 { width: 119px; letter-spacing: -.1px; } .t2, .t3 { width: 60px; } .t2 { margin-left: -2px; } .hl { color: #4fb053; }
  .arrow { margin: 0 9px 0 8px; } .t4 { width: 48px; margin-left: -2px; }
  .desktop .hd-line { width: 1px; height: 60px; background: #33393a; margin-left: 25px; }
  .srv { margin-left: 40px; }
  .live-lbl { margin-left: 24px; width: 59px; font-size: 22px; color: #4da950; }
  .count { width: 60px; height: 40px; border-radius: 6px; background: #4da950; color: #fff; font-size: 20px; line-height: 40px; text-align: center; }
  button { margin-left: 40px; width: 125px; height: 70px; border: 0; border-radius: 7px; background: #4da950; color: #0d1110; font: 500 26px Inter, sans-serif; padding: 0; letter-spacing: .5px; }

  .tabs { height: 62px; flex: none; background: #1f2223; display: flex; }
  .tab { box-sizing: border-box; border-right: 2px solid #282c2d; display: flex; align-items: center; padding: 0 0 0 19px; color: #758788; font-size: 21.500px; letter-spacing: .2px; white-space: nowrap; }
  .tab > i + span { margin-left: 9px; padding-top: 1px; }
  .w1 { width: 137px; padding-left: 16px; } .w2 { width: 148px; } .w3 { width: 110px; padding-left: 22px; } .w4 { width: 120px; } .w5 { width: 184px; padding-left: 14px; } .w6 { width: 227px; padding-left: 17px; } .w7 { width: 178px; padding-left: 18px; } .w8 { width: 140px; } .w9 { width: 36px; padding-left: 17px; } .w10 { width: 357px; padding-left: 16px; letter-spacing: .3px; }
  .tab.on { background: #0c0e0e; color: #b5c0c1; border-top: 3px solid #4da950; border-right-width: 1px; margin-top: -1px; letter-spacing: 0; }
  .mini { width: 2px; height: 48px; background: #353c3d; }
  .tab.w3 > i + span { margin-left: 13px; } .tab.w4 > i + span, .tab.w7 > i + span { margin-left: 10px; } .tab.w5 > i + span { margin-left: 8px; } .tab.w10 > i + span { margin-left: 7px; }
  .tab.w1 > i + span { margin-left: 9px; padding: 0; }
  .w5, .w6 { letter-spacing: .3px; }
  .grip { margin-left: auto; margin-right: 18px; }
  .pill { display: flex; background: #ef9a38; border-radius: 20px; height: 40px; color: #fff; align-items: center; text-align: center; line-height: 40px; overflow: hidden; font-size: 22px; letter-spacing: 0; }
  .pill b { font-weight: 400; background: #26080b; border-radius: 0 20px 20px 0; height: 40px; box-sizing: border-box; }
  .pill.sm { width: 87px; margin-left: auto; margin-right: 16px; }
  .pill.sm b { width: 49px; border-radius: 20px; } .pill.sm em { width: 26px; }
  .pill.lg { width: 140px; background: linear-gradient(90deg, #2b3032 30px, #26080b 30px 80px, #ef9a38 80px); }
  .pill.lg s { width: 64px; height: 40px; border-radius: 0 20px 20px 0; background: #2b3032; display: flex; align-items: center; justify-content: center; color: #b0bcbd; }
  .pill.lg b { width: 38px; padding-right: 11px; } .pill.lg em { width: 25px; }

  .body { flex: 1; display: flex; background: #0c0e0e; }
  .content { width: 2158px; flex: none; }
  .controls { display: flex; justify-content: flex-end; align-items: center; gap: 24px; padding: 16px 17px 0 0; height: 56px; }
  .select { width: 320px; height: 56px; box-sizing: border-box; border: 2px solid #3a4344; border-radius: 8px; background: #2d3435; display: flex; align-items: center; padding: 0 0 1px 16px; color: #b0bcbd; font-size: 23.500px; letter-spacing: .3px; }
  .select i { width: 2px; height: 20px; margin-left: auto; background: #758788; }
  .select svg { margin: 0 14px 0 12px; }
  .btn { height: 52px; box-sizing: border-box; border-radius: 8px; display: flex; align-items: center; font-size: 24px; letter-spacing: .6px; white-space: nowrap; }
  .outline { width: 179px; border: 2px solid #333b3b; padding-left: 22px; color: #b0bcbd; gap: 6px; letter-spacing: .5px; }
  .solid { width: 216px; background: #264a29; color: #0e1411; padding-left: 25px; gap: 9px; letter-spacing: .2px; }
  h1 { margin: 32px 0 0 13px; font-size: 38.500px; line-height: 48px; font-weight: 600; color: #b0bcbd; letter-spacing: -.2px; }
  .host { margin: 52px 0 0 20px; height: 40px; display: grid; align-items: center; justify-items: start; grid-template-columns: 53px 17px 225px 44px 20px 50px 17px 157px 19px 34px 86px 21px 32px 87px 16px 30px; color: #b0bcbd; white-space: nowrap; }
  .bar { width: 2px; height: 32px; background: #69797a; }
  .name { font-size: 27.500px; font-weight: 600; letter-spacing: .95px; }
  .dim { color: #758788; } .bright { color: #b0bcbd; }
  .on-pill { width: 70px; height: 40px; border-radius: 20px; background: #4da950; color: #fff; font-size: 22px; line-height: 40px; text-align: center; }
  .fx { font: italic 24px "Liberation Serif", serif; } .fx small { font: 16px Inter, sans-serif; }
  .meta { margin: 20px 0 0 23px; height: 32px; display: grid; align-items: center; justify-items: start; grid-template-columns: 37px 715px 110px 17px 244px 24px 34px 80px; color: #758788; font-size: 22px; letter-spacing: .2px; white-space: nowrap; }
  .specs { display: flex; align-items: center; } .specs small { width: 23px; font-size: 15px; text-align: center; letter-spacing: 0; }
  .tz { font-size: 23.500px; }
  .cards { display: flex; gap: 8px; margin: 16px 0 0 20px; }
  h2 { margin: 0 0 8px 16px; font-size: 22px; line-height: 28px; font-weight: 400; color: #758788; letter-spacing: .1px; }
  .tick { font-size: 14px; fill: #e3e6e6; text-anchor: end; letter-spacing: .2px; }
  .tick.start { text-anchor: start; }

  aside { width: 604px; flex: none; box-sizing: border-box; border-left: 2px solid #1e2222; overflow: hidden; }
  .a-title { height: 96px; box-sizing: border-box; border-bottom: 2px solid #212526; display: flex; align-items: center; padding: 0 2px 0 14px; color: #b0bcbd; }
  .a-title b { margin-left: 16px; font-size: 22px; font-weight: 600; letter-spacing: .6px; }
  .collapse { margin-left: auto; }
  .a-tabs { height: 66px; box-sizing: border-box; border-bottom: 2px solid #212526; display: grid; grid-template-columns: repeat(4, 153px); padding-left: 2px; color: #758788; }
  .a-tabs i { display: flex; align-items: center; justify-content: center; padding-bottom: 3px; }
  .desktop .sel { border-bottom: 4px solid #66b86a; padding: 0 0 1px 0; }
  .search { margin: 8px 0 0 15px; height: 56px; box-sizing: border-box; border: 2px solid #384041; border-radius: 4px; background: #2d3435; color: #6a7a7b; font-size: 24px; line-height: 53px; padding-left: 16px; letter-spacing: .3px; }
  p { margin: 9px 1px 0 0; text-align: right; color: #758788; font-size: 19.500px; line-height: 24px; letter-spacing: .55px; }
  .row { display: flex; align-items: center; height: 48px; font-size: 23.500px; box-sizing: border-box; }
  .row.live { margin-top: 71px; padding-left: 22px; color: #4da950; }
  .row.live svg:nth-of-type(2) { margin-left: 24px; }
  .row.live b { margin-left: 19px; font-size: 24px; font-weight: 600; letter-spacing: .4px; padding-top: 1px; }
  .row.leaf { padding: 1px 0 0 99px; color: #b0bcbd; } .row.leaf span { margin-left: 21px; letter-spacing: .35px; }

  .vscroll { width: 16px; flex: none; background: #101313; } .vscroll i { height: 487px; background: #1d2122; border-radius: 0 0 8px 8px; }
  .hscroll { height: 16px; flex: none; background: #191c1c; display: flex; justify-content: space-between; }
  .hscroll i { width: 2848px; background: #212526; border-radius: 0 8px 8px 0; } .hscroll u { width: 16px; background: #c4c6c6; }

  .dock { align-self: flex-start; margin: 2px 0 0 107px; width: 2667px; height: 138px; flex: none; box-sizing: border-box; border: 2px solid rgba(200, 150, 150, .32); border-radius: 36px; display: flex; gap: 28px; padding: 18px 0 0 17px;
    background: linear-gradient(90deg, #1b1d27 0, #1c1e27 360px, #34151f 480px, #401729 600px, #4a1b2d 720px, #4c1d1c 960px, #561e1c 1080px, #451525 1200px, #401a26 1400px, #3f1728 1600px, #4c1a34 1880px, #4c1a2e 2080px, #561d20 2280px, #681e1a 2520px, #72261a 2667px); }
  .slot { width: 88px; height: 88px; flex: none; position: relative; }
  .slot svg { width: 88px; height: 88px; overflow: visible; }
  .slot.run::after { content: ""; position: absolute; left: 40px; top: 106px; width: 8px; height: 8px; border-radius: 50%; background: #c39aa6; }
  .petal { mix-blend-mode: multiply; opacity: .85; }
  .badge { position: absolute; right: -13px; top: -10px; width: 40px; height: 40px; border-radius: 50%; background: #e2483d; color: #fff; font-size: 22px; font-weight: 400; line-height: 40px; text-align: center; }
  .dock .sep { width: 2px; height: 102px; margin: -2px 10px 0 12px; background: #a0666e; }
  .dock .second { margin: -2px 15px 0 12px; }
</style>
